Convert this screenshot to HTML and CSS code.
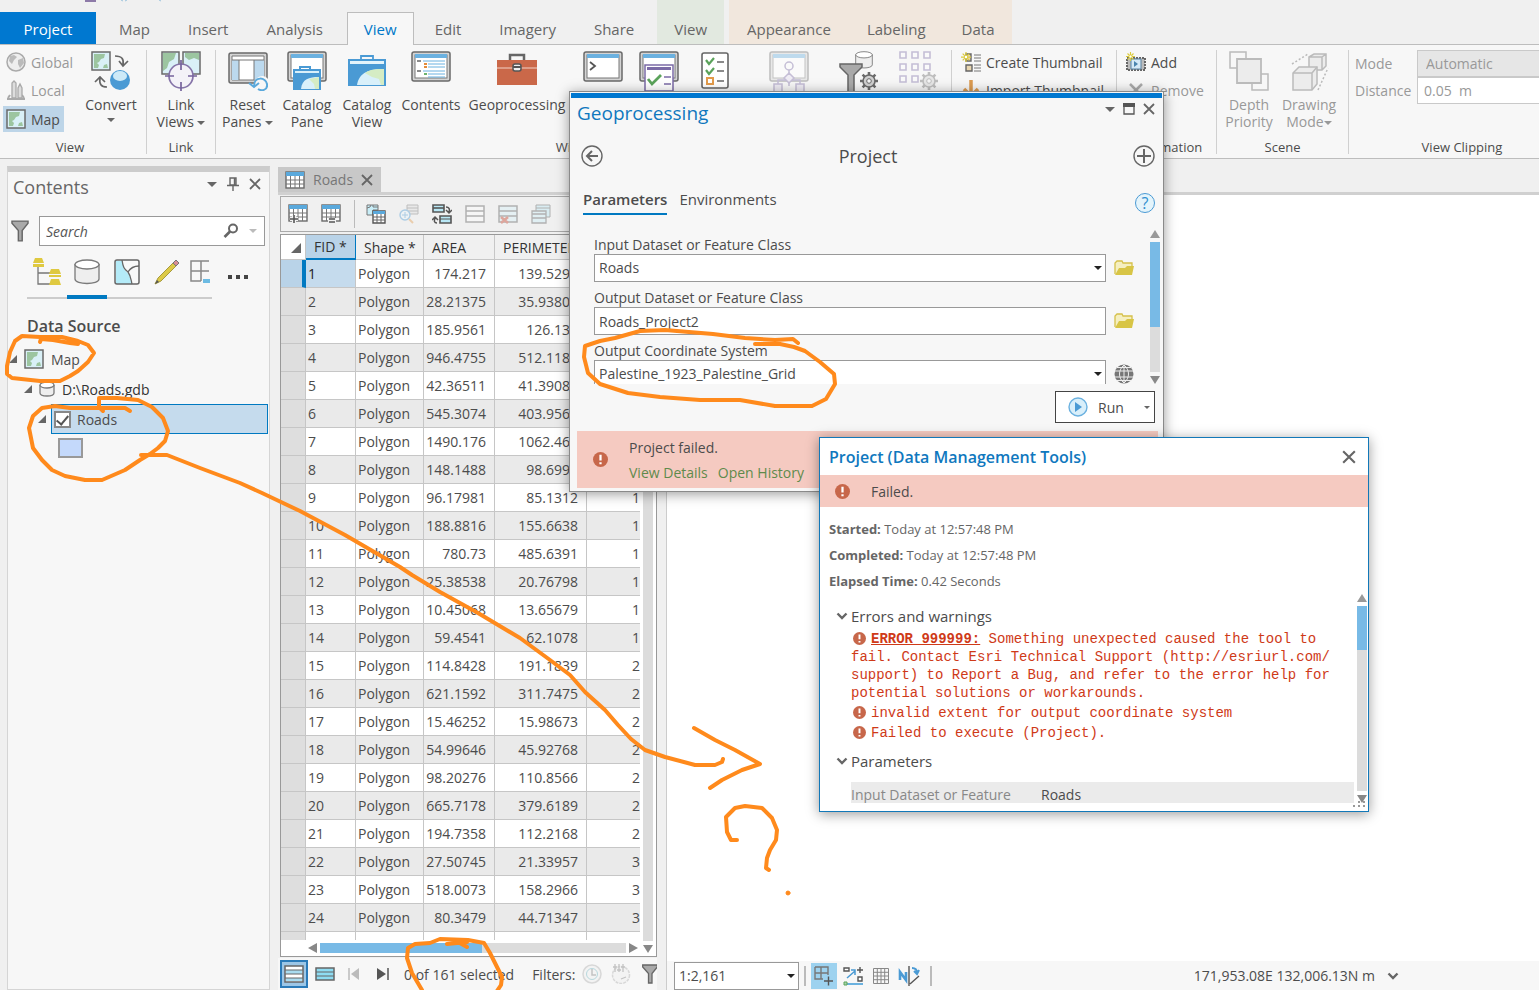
FILE: index.html
```html
<!DOCTYPE html>
<html lang="en">
<head>
    <meta charset="UTF-8" />
    <meta name="viewport" content="width=device-width, initial-scale=1.0" />
    <title>Roads - Project</title>
    <link rel="stylesheet" href="styles.css">
</head>
<body>
    <!-- shared icons -->
    <svg class="defs" aria-hidden="true">
        <symbol id="i-map" viewBox="0 0 20 20">
            <rect x="1" y="1" width="18" height="18" fill="#d9f0f7" stroke="#6a6a6a" stroke-width="1.5" />
            <path d="M3 3h11l-1 4-3 1-2 3-2 1 2 2-1 3H3zM12 17l1-3 3-1 1 4zM3 9l2 1-1 2z" fill="#9cc5a0" />
        </symbol>
        <symbol id="i-error" viewBox="0 0 16 16">
            <circle cx="8" cy="8" r="8" fill="#c7674a" />
            <path d="M8 3v6M8 11v2" stroke="#fff" stroke-width="2.4" />
        </symbol>
        <symbol id="i-close" viewBox="0 0 12 12">
            <path d="M1 1l10 10M11 1L1 11" stroke="currentColor" stroke-width="1.8" fill="none" />
        </symbol>
        <symbol id="i-table" viewBox="0 0 20 18">
            <rect x="1" y="1" width="18" height="16" fill="#fff" stroke="#6a6a6a" stroke-width="1.4" />
            <rect x="1" y="1" width="18" height="4" fill="#5aa9dc" />
            <path d="M1 9h18M1 13h18M5.500 5v12M10 5v12M14.500 5v12" stroke="#777" fill="none" />
        </symbol>
        <symbol id="i-window" viewBox="0 0 40 32">
            <rect x="1" y="1" width="38" height="29" rx="2" fill="#d4d4d4" stroke="#6a6a6a" stroke-width="1.500" />
            <rect x="4" y="4" width="32" height="23" fill="#fff" stroke="#777" />
            <rect x="4" y="3" width="32" height="4" fill="#6bb1e0" />
        </symbol>
        <symbol id="i-gear" viewBox="0 0 20 20">
            <path d="M10 1v18M1 10h18M3.600 3.600l12.800 12.800M16.400 3.600L3.600 16.400" stroke="#6a6a6a" stroke-width="2.600" />
            <circle cx="10" cy="10" r="6" fill="#d0d0d0" stroke="#6a6a6a" stroke-width="1.600" />
            <circle cx="10" cy="10" r="2.300" fill="#f7f7f7" stroke="#6a6a6a" />
        </symbol>
        <symbol id="i-funnel" viewBox="0 0 16 20">
            <path d="M.7 1h14.600v2L10 9.500V19H6.500V9.500L.7 3z" fill="#a9a9a9" stroke="#666" stroke-width="1.300" />
        </symbol>
        <symbol id="i-folder" viewBox="0 0 20 16">
            <path d="M1 14V3l2-2h5l1 2h9v4" fill="#f5efc0" stroke="#d5c04a" stroke-width="1.300" />
            <path d="M1 15L5 8h6l2-2h7l-2 9z" fill="#d8c546" />
        </symbol>
        <symbol id="i-cylinder" viewBox="0 0 26 26">
            <path d="M1 5v15c0 6 24 6 24 0V5" fill="#eee" stroke="#7a7a7a" stroke-width="1.300" />
            <ellipse cx="13" cy="5.500" rx="12" ry="4.500" fill="#fff" stroke="#7a7a7a" stroke-width="1.300" />
        </symbol>
        <symbol id="i-spark" viewBox="0 0 12 12">
            <path d="M6 0v12M0 6h12M2 2l8 8M10 2l-8 8" stroke="#dccb3c" stroke-width="1.500" />
            <circle cx="6" cy="6" r="2" fill="#fff" stroke="#dccb3c" />
        </symbol>
        <symbol id="i-chevron" viewBox="0 0 12 8">
            <path d="M1.500 1.500L6 6l4.500-4.500" stroke="#666" stroke-width="2.400" fill="none" />
        </symbol>
    </svg>

    <nav class="tabs">
        <button class="tab tab-project">Project</button>
        <button class="tab">Map</button>
        <button class="tab">Insert</button>
        <button class="tab">Analysis</button>
        <button class="tab tab-active">View</button>
        <button class="tab">Edit</button>
        <button class="tab">Imagery</button>
        <button class="tab">Share</button>
        <div class="context context-green">
            <button class="tab">View</button>
        </div>
        <div class="context context-peach">
            <button class="tab">Appearance</button>
            <button class="tab">Labeling</button>
            <button class="tab">Data</button>
        </div>
        <svg class="quick" viewBox="0 0 90 2" aria-hidden="true">
            <path d="M0 0h11v2H0z" fill="#8d7aa8" /><path d="M36 0l2 1M42 0l-2 1M74 0l2 1" stroke="#9cc3dd" />
        </svg>
    </nav>

    <div class="ribbon">
        <section class="group group-view">
            <div class="tools">
                <div class="stack">
                    <button class="small" disabled>
                        <svg width="20" height="20" viewBox="0 0 20 20"><circle cx="10" cy="10" r="9" fill="#eee" stroke="#aaa" stroke-width="1.500" /><path d="M4 4l4-1 3 2-3 3-2 4-3-3zM12 8l5-2 1 5-4 5-2-4z" fill="#bbb" /></svg>
                        Global
                    </button>
                    <button class="small" disabled>
                        <svg width="20" height="20" viewBox="0 0 20 20"><path d="M1 19h18M2 18l2-3M18 18l-2-3" stroke="#aaa" stroke-width="2" /><path d="M6 18V3l2-2 2 2v15zM12 18V8l2-4 2 4v10z" fill="#ddd" stroke="#aaa" stroke-width="1.300" /></svg>
                        Local
                    </button>
                    <button class="small small-on">
                        <svg width="20" height="20"><use href="#i-map" /></svg>
                        Map
                    </button>
                </div>
                <button class="big big-convert">
                    <svg width="40" height="40" viewBox="0 0 40 40">
                        <use href="#i-map" width="20" height="20" />
                        <path d="M24 5c7 0 9 3 8 9M28 10l4 5 5-5M16 36c-6 0-8-3-7-9M4 31l5-5 5 5" fill="none" stroke="#666" stroke-width="1.700" />
                        <circle cx="29" cy="29" r="10" fill="#4a9ad4" /><ellipse cx="29" cy="25" rx="7" ry="5" fill="#cdeaf8" />
                    </svg>
                    <span>Convert</span>
                    <i class="caret"></i>
                </button>
            </div>
            <h2>View</h2>
        </section>

        <section class="group group-link">
            <div class="tools">
                <button class="big">
                    <svg width="40" height="40" viewBox="0 0 40 40">
                        <path d="M1 1h17v22H1zM22 1h17v22H22z" fill="#d9f0f7" stroke="#6a6a6a" stroke-width="1.500" />
                        <path d="M2 2h13l-2 6-5 3-2 6-4 3zM24 2h14v7l-5-2-5 2-4-3z" fill="#9cc5a0" />
                        <circle cx="20" cy="25" r="12" fill="#f4f2f8" stroke="#8574a8" stroke-width="1.700" />
                        <path d="M20 9v10M20 31v9M4 25h9M27 25h9" stroke="#75639c" stroke-width="1.700" />
                    </svg>
                    <span>Link<br>Views <i class="caret"></i></span>
                </button>
            </div>
            <h2>Link</h2>
        </section>

        <section class="group group-windows">
            <div class="tools">
                <button class="big">
                    <svg width="40" height="40" viewBox="0 0 40 40">
                        <rect x="1" y="2" width="38" height="30" rx="2" fill="#d4d4d4" stroke="#6a6a6a" stroke-width="1.500" /><path d="M4 5h32v24H4z" fill="#fff" stroke="#777" />
                        <path d="M4 9h7v20H4zM26 9h10v20H26z" fill="#bcd9ee" /><path d="M4 9h32M11 9v20M26 9v20" stroke="#777" />
                        <path d="M28 33c2-9 12-7 11 0s-8 8-10 5" fill="#f7f7f7" stroke="#f7f7f7" stroke-width="4" />
                        <path d="M21 32l5 4 5-4M26 35c0-10 12-9 13-2s-6 7-9 5" fill="none" stroke="#5aa9dc" stroke-width="2" />
                    </svg>
                    <span>Reset<br>Panes <i class="caret"></i></span>
                </button>
                <button class="big">
                    <svg width="40" height="40" viewBox="0 0 40 40">
                        <use href="#i-window" width="40" height="32" />
                        <path d="M13 18v-2h10v2" fill="none" stroke="#4a9ad4" stroke-width="2" /><path d="M6 18h28v21H6z" fill="#4a9ad4" /><path d="M8 20h24v2H8z" fill="#d9f0fa" />
                        <path d="M14 38c1-10 8-12 18-12v12z" fill="#d9f0fa" /><path d="M22 28l10-2v12h-4l-1-5z" fill="#d5ecc4" />
                    </svg>
                    <span>Catalog<br>Pane</span>
                </button>
                <button class="big">
                    <svg width="40" height="40" viewBox="0 0 40 40">
                        <path d="M14 8V5h12v3" fill="none" stroke="#4a9ad4" stroke-width="1.800" /><path d="M1 8h38v27H1z" fill="#4a9ad4" /><path d="M3 10h34v3H3z" fill="#e4f4fb" />
                        <path d="M10 34c2-13 13-16 27-16v16z" fill="#d9f0fa" /><path d="M18 22c5-4 12-4 19-4v16h-3l-2-6-7-2z" fill="#d5ecc4" />
                    </svg>
                    <span>Catalog<br>View</span>
                </button>
                <button class="big">
                    <svg width="40" height="40" viewBox="0 0 40 40">
                        <use href="#i-window" width="40" height="32" />
                        <path d="M6 10h4M6 20h4" stroke="#666" stroke-width="1.500" /><path d="M12 10h22M17 13h17M17 16h17M12 20h22M17 23h17M17 26h17" stroke="#6bb1e0" /><path d="M13 13h3M13 16h3" stroke="#e38b3a" stroke-width="2" /><path d="M13 23h3" stroke="#6db36d" stroke-width="2" />
                    </svg>
                    <span>Contents</span>
                </button>
                <button class="big">
                    <svg width="40" height="40" viewBox="0 0 40 40">
                        <path d="M13 9V4h14v5" fill="none" stroke="#666" stroke-width="2.500" /><path d="M0 9h40v25H0z" fill="#ca6849" /><path d="M0 17h40" stroke="#f3d3c8" />
                        <rect x="16" y="13" width="8" height="7" rx="2" fill="#eee" stroke="#555" stroke-width="1.500" /><path d="M16 16h8" stroke="#555" stroke-width="2" />
                    </svg>
                    <span>Geoprocessing</span>
                </button>
                <button class="big" aria-label="Python">
                    <svg width="40" height="40" viewBox="0 0 40 40"><use href="#i-window" width="40" height="32" /><path d="M7 11l5 4-5 4" fill="none" stroke="#555" stroke-width="1.800" /></svg>
                </button>
                <button class="big" aria-label="Tasks">
                    <svg width="40" height="40" viewBox="0 0 40 40"><use href="#i-window" width="40" height="32" /><path d="M6 14h28v26H6z" fill="#fff" stroke="#7b6ba6" stroke-width="1.500" /><path d="M8 16h24v3H8z" fill="#7b6ba6" /><path d="M25 26h7M25 33h7" stroke="#7b6ba6" stroke-width="1.500" /><path d="M9 28l4 5 9-9" fill="none" stroke="#5ba35b" stroke-width="2.800" /></svg>
                </button>
                <button class="big" aria-label="Task items">
                    <svg width="40" height="40" viewBox="0 0 40 40"><rect x="7" y="2" width="26" height="35" rx="2" fill="#fff" stroke="#666" stroke-width="1.600" /><path d="M22 11h7M22 20h7M22 30h7" stroke="#666" stroke-width="1.500" /><path d="M11 9l3 4 5-6M11 19l3 4 5-6" fill="none" stroke="#5ba35b" stroke-width="2.200" /><path d="M12 27h6v6h-6z" fill="#fff" stroke="#e39b4a" stroke-width="2" /></svg>
                </button>
                <button class="big faded" aria-label="Workflow" disabled>
                    <svg width="40" height="40" viewBox="0 0 40 40"><use href="#i-window" width="40" height="32" /><path d="M20 15v20M9 36v-7h22v7" fill="none" stroke="#7b6ba6" stroke-width="1.500" /><circle cx="20" cy="15" r="4" fill="#fff" stroke="#7b6ba6" stroke-width="1.500" /><path d="M20 22l5 5-5 5-5-5zM5 33h8v8H5zM27 33h8v8h-8z" fill="#e4def2" stroke="#7b6ba6" stroke-width="1.500" /></svg>
                </button>
                <button class="big" aria-label="Filter settings">
                    <svg width="40" height="40" viewBox="0 0 40 40"><use href="#i-cylinder" x="16" width="18" height="18" /><path d="M1 13h22v3l-8 8v17H9V24l-8-8z" fill="#a9a9a9" stroke="#666" stroke-width="1.500" /><use href="#i-gear" x="20" y="20" width="20" height="20" /></svg>
                </button>
                <button class="big faded" aria-label="Grid settings" disabled>
                    <svg width="40" height="40" viewBox="0 0 40 40"><path d="M1 1h6v6H1zM13 1h6v6h-6zM25 1h6v6h-6zM1 13h6v6H1zM13 13h6v6h-6zM25 13h6v6h-6zM1 25h6v6H1zM13 25h6v6h-6z" fill="#fff" stroke="#7b6ba6" stroke-width="1.600" /><use href="#i-gear" x="20" y="20" width="20" height="20" /></svg>
                </button>
            </div>
            <h2>Windows</h2>
        </section>

        <section class="group group-thumbnail">
            <div class="stack">
                <button class="small">
                    <svg width="20" height="20" viewBox="0 0 20 20"><path d="M5 2h5v7H5zM5 13h6v6H5z" fill="#e8d6b0" stroke="#666" stroke-width="1.400" /><path d="M13 3h7M13 6h7M13 9h7M13 13h7M13 16h7M13 19h7" stroke="#777" /><use href="#i-spark" width="10" height="10" /></svg>
                    Create Thumbnail
                </button>
                <button class="small">
                    <svg width="20" height="20" viewBox="0 0 20 20"><path d="M10 0v16M3 9l7 7 7-7" fill="none" stroke="#dc9b50" stroke-width="3.500" /></svg>
                    Import Thumbnail
                </button>
            </div>
            <h2>Thumbnail</h2>
        </section>

        <section class="group group-animation">
            <div class="stack">
                <button class="small">
                    <svg width="20" height="20" viewBox="0 0 20 20"><path d="M1 6h18v12H1z" fill="#bbb" stroke="#666" stroke-dasharray="2 1" stroke-width="2" /><path d="M5 7h10v10H5z" fill="#d5e9f6" stroke="#5b83a3" /><path d="M8 9l4 3-4 3z" fill="#4a84ad" /><use href="#i-spark" width="9" height="9" /></svg>
                    Add
                </button>
                <button class="small" disabled>
                    <svg width="20" height="20" viewBox="0 0 20 20"><path d="M4 4l12 12M16 4L4 16" stroke="#aaa" stroke-width="2.500" /></svg>
                    Remove
                </button>
            </div>
            <h2>Animation</h2>
        </section>

        <section class="group group-scene">
            <div class="tools">
                <button class="big" disabled>
                    <svg width="40" height="40" viewBox="0 0 40 40"><path d="M1 1h16v16H1zM23 23h16v16H23z" fill="#f7f7f7" stroke="#bbb" stroke-width="1.500" /><path d="M8 8h24v24H8z" fill="#ececec" stroke="#bbb" stroke-width="1.800" /></svg>
                    <span>Depth<br>Priority</span>
                </button>
                <button class="big" disabled>
                    <svg width="40" height="40" viewBox="0 0 40 40"><path d="M20 6l5-3h12v12l-4 4H20zM20 6h13v13M33 6l4-3" fill="#ececec" stroke="#bbb" stroke-width="1.500" /><path d="M4 22l6-6h18v17l-5 6H4z" fill="#ececec" stroke="#bbb" stroke-width="1.500" /><path d="M4 22h19v17M23 22l5-6" fill="none" stroke="#bbb" stroke-width="1.500" /><path d="M3 13L19 3M29 39l10-22" stroke="#bbb" stroke-dasharray="2 2" stroke-width="1.500" /></svg>
                    <span>Drawing<br>Mode<i class="caret caret-dim"></i></span>
                </button>
            </div>
            <h2>Scene</h2>
        </section>

        <section class="group group-clipping">
            <div class="clip-form">
                <label for="clip-mode">Mode</label>
                <select id="clip-mode" disabled><option>Automatic</option></select>
                <label for="clip-distance">Distance</label>
                <input id="clip-distance" type="text" value="0.05  m" disabled>
            </div>
            <h2>View Clipping</h2>
        </section>
    </div>

    <main class="workspace">
        <aside class="contents">
            <header class="pane-head">
                <h1>Contents</h1>
                <button class="icon-btn" aria-label="Menu"><i class="caret caret-lg"></i></button>
                <button class="icon-btn" aria-label="Pin"><svg width="12" height="14" viewBox="0 0 12 14"><path d="M3 1h6v7H3zM7.500 1v7M0 8.500h12M6 9v5" fill="none" stroke="#666" stroke-width="1.400" /></svg></button>
                <button class="icon-btn" aria-label="Close"><svg width="12" height="12"><use href="#i-close" /></svg></button>
            </header>
            <div class="search-row">
                <svg width="18" height="22"><use href="#i-funnel" /></svg>
                <div class="search">
                    <input type="text" placeholder="Search" aria-label="Search">
                    <svg width="16" height="16" viewBox="0 0 16 16"><circle cx="10" cy="5.500" r="4" fill="none" stroke="#666" stroke-width="2" /><path d="M7 8.500L1.500 14" stroke="#666" stroke-width="2.600" /></svg>
                    <i class="caret caret-light"></i>
                </div>
            </div>
            <div class="list-by">
                <button class="list-tab" aria-label="List by drawing order"><svg width="28" height="28" viewBox="0 0 28 28"><path d="M5 8v18h14M5 15h14" fill="none" stroke="#777" stroke-width="1.300" /><path d="M2 0h7l2 5H0zM0 6h11v3H0zM18 11h8l2 5H16zM16 17h12v2H16zM18 21h8l2 6H16z" fill="#dfc940" /></svg></button>
                <button class="list-tab list-tab-on" aria-label="List by data source"><svg width="26" height="26"><use href="#i-cylinder" /></svg></button>
                <button class="list-tab" aria-label="List by selection"><svg width="26" height="26" viewBox="0 0 26 26"><rect x="1" y="1" width="24" height="24" rx="2" fill="#f9f9f9" /><path d="M2 2h6c1 7 2 9 6 12 2 3 3 7 3 11H2z" fill="#b4ebf8" /><path d="M8 1c1 7 2 9 6 12 3 4 3 8 4 12M14 13c3-5 7-6 11-6" fill="none" stroke="#666" stroke-width="1.300" /><rect x="1" y="1" width="24" height="24" rx="2" fill="none" stroke="#666" stroke-width="1.500" /></svg></button>
                <button class="list-tab" aria-label="List by editing"><svg width="26" height="26" viewBox="0 0 26 26"><path d="M1 25l3-6L19 4l3 3L7 22z" fill="#ddca47" stroke="#a79a3d" /><path d="M1 25l2-4 2 2z" fill="#555" /><path d="M19 4l3-3 3 3-3 3z" fill="#d98d93" stroke="#777" /></svg></button>
                <button class="list-tab" aria-label="List by snapping"><svg width="22" height="26" viewBox="0 0 22 26"><path d="M20 2H2v20h10M2 12h18M12 2v20" fill="none" stroke="#888" stroke-width="1.500" /><path d="M14 20h7v4h-7z" fill="#6cbbe3" /></svg></button>
                <button class="list-more" aria-label="More"><svg width="20" height="6" viewBox="0 0 20 6"><path d="M0 1h4v4H0zM8 1h4v4H8zM16 1h4v4h-4z" fill="#444" /></svg></button>
            </div>
            <h3>Data Source</h3>
            <ul class="tree">
                <li class="tree-row tree-map"><i class="expander"></i><svg width="20" height="20"><use href="#i-map" /></svg><span>Map</span></li>
                <li class="tree-row tree-gdb"><i class="expander"></i><svg width="16" height="16" viewBox="0 0 16 16"><path d="M1 4v8c0 4 14 4 14 0V4" fill="#eee" stroke="#7a7a7a" stroke-width="1.300" /><ellipse cx="8" cy="4" rx="7" ry="3" fill="#fff" stroke="#7a7a7a" stroke-width="1.300" /></svg><span>D:\Roads.gdb</span></li>
                <li class="tree-row tree-layer"><i class="expander"></i>
                    <label class="layer"><input type="checkbox" checked> Roads</label>
                </li>
                <li class="tree-symbol"></li>
            </ul>
        </aside>

        <section class="table-pane">
            <div class="doc-tab">
                <svg width="20" height="18"><use href="#i-table" /></svg>
                <span>Roads</span>
                <button class="icon-btn" aria-label="Close Roads"><svg width="12" height="12"><use href="#i-close" /></svg></button>
            </div>
            <div class="table-box">
                <div class="table-tools">
                    <button class="icon-btn" aria-label="Add field"><svg width="20" height="20" viewBox="0 0 20 20"><use href="#i-table" width="20" height="18" /><path d="M2 15h8M6 11v8" stroke="#f2f2f2" stroke-width="4" /><path d="M2 15h8M6 11v8" stroke="#555" stroke-width="1.600" /></svg></button>
                    <button class="icon-btn" aria-label="Delete field"><svg width="20" height="20" viewBox="0 0 20 20"><use href="#i-table" width="20" height="18" /><path d="M7 14h8v5H7z" fill="#f2f2f2" /><path d="M8 15h6M8 18h6" stroke="#555" stroke-width="1.500" /></svg></button>
                    <span class="rule"></span>
                    <button class="icon-btn" aria-label="Select by attributes"><svg width="20" height="20" viewBox="0 0 20 20"><path d="M1 1h11v5H7v5H1z" fill="#c8eef8" stroke="#777" /><path d="M1 4l3-1 1-2M7 1v2h5" fill="none" stroke="#777" /><path d="M7 7h12v12H7z" fill="#fff" stroke="#555" stroke-width="1.400" /><path d="M7 7h12v3H7z" fill="#5aa9dc" /><path d="M7 13h12M7 16h12M11 10v9M15 10v9" stroke="#666" /></svg></button>
                    <button class="icon-btn faded" aria-label="Zoom to"><svg width="20" height="20" viewBox="0 0 20 20"><path d="M8 1h11v9H8zM8 4h11M8 7h11" fill="#ddd" stroke="#777" /><circle cx="6" cy="11" r="5" fill="#e9f5fa" stroke="#4a9ad4" stroke-width="1.400" /><path d="M6 8v6M3 11h6" stroke="#4a9ad4" /><path d="M10 15l4 4" stroke="#e39b4a" stroke-width="2" /></svg></button>
                    <button class="icon-btn" aria-label="Switch selection"><svg width="20" height="20" viewBox="0 0 20 20"><path d="M1 1h11v7H1z" fill="#b9e8f6" stroke="#555" stroke-width="1.600" /><path d="M1 4h11" stroke="#555" stroke-width="1.600" /><path d="M8 12h11v7H8z" fill="#b9e8f6" stroke="#555" stroke-width="1.600" /><path d="M8 15h11" stroke="#555" /><path d="M14 3c3 0 4 2 3 5M14 6l3 3 3-3M5 19c-3 0-3-2-2-5M0 16l3-3 3 3" fill="none" stroke="#555" stroke-width="1.500" /></svg></button>
                    <button class="icon-btn faded" aria-label="Clear selection"><svg width="20" height="20" viewBox="0 0 20 20"><path d="M1 2h18v16H1zM1 7h18M1 12h18" fill="#fff" stroke="#555" stroke-width="1.500" /></svg></button>
                    <button class="icon-btn faded" aria-label="Delete selection"><svg width="20" height="20" viewBox="0 0 20 20"><path d="M1 2h18v16H1zM1 7h18M1 12h18" fill="#d5f0f8" stroke="#555" stroke-width="1.500" /><path d="M3 13l7 6M10 13l-7 6" stroke="#c23a22" stroke-width="2.600" /></svg></button>
                    <button class="icon-btn faded" aria-label="Copy"><svg width="20" height="20" viewBox="0 0 20 20"><path d="M5 1h14v12H5z" fill="#b9e8f6" stroke="#555" /><path d="M5 4h14" stroke="#555" /><path d="M1 7h14v12H1zM1 10h14M1 14h14" fill="#c9eef8" stroke="#555" stroke-width="1.300" /></svg></button>
                </div>
                <div class="grid-row">
                    <div class="grid-col">
                        <div class="grid-scroll">
                            <table>
                                <colgroup><col class="c-head"><col class="c-fid"><col class="c-shape"><col class="c-area"><col class="c-perim"><col class="c-next"></colgroup>
                                <thead>
                                    <tr><th class="corner"><i class="expander"></i></th><th class="sorted">FID *</th><th>Shape *</th><th>AREA</th><th>PERIMETER</th><th></th></tr>
                                </thead>
                                <tbody>
                                    <tr class="current"><th></th><td>1</td><td>Polygon</td><td>174.217</td><td>139.5291</td><td></td></tr>
                                    <tr><th></th><td>2</td><td>Polygon</td><td>28.21375</td><td>35.93801</td><td></td></tr>
                                    <tr><th></th><td>3</td><td>Polygon</td><td>185.9561</td><td>126.131</td><td></td></tr>
                                    <tr><th></th><td>4</td><td>Polygon</td><td>946.4755</td><td>512.1181</td><td></td></tr>
                                    <tr><th></th><td>5</td><td>Polygon</td><td>42.36511</td><td>41.39081</td><td></td></tr>
                                    <tr><th></th><td>6</td><td>Polygon</td><td>545.3074</td><td>403.9561</td><td></td></tr>
                                    <tr><th></th><td>7</td><td>Polygon</td><td>1490.176</td><td>1062.461</td><td></td></tr>
                                    <tr><th></th><td>8</td><td>Polygon</td><td>148.1488</td><td>98.6991</td><td></td></tr>
                                    <tr><th></th><td>9</td><td>Polygon</td><td>96.17981</td><td>85.1312</td><td>1</td></tr>
                                    <tr><th></th><td>10</td><td>Polygon</td><td>188.8816</td><td>155.6638</td><td>1</td></tr>
                                    <tr><th></th><td>11</td><td>Polygon</td><td>780.73</td><td>485.6391</td><td>1</td></tr>
                                    <tr><th></th><td>12</td><td>Polygon</td><td>25.38538</td><td>20.76798</td><td>1</td></tr>
                                    <tr><th></th><td>13</td><td>Polygon</td><td>10.45068</td><td>13.65679</td><td>1</td></tr>
                                    <tr><th></th><td>14</td><td>Polygon</td><td>59.4541</td><td>62.1078</td><td>1</td></tr>
                                    <tr><th></th><td>15</td><td>Polygon</td><td>114.8428</td><td>191.1839</td><td>2</td></tr>
                                    <tr><th></th><td>16</td><td>Polygon</td><td>621.1592</td><td>311.7475</td><td>2</td></tr>
                                    <tr><th></th><td>17</td><td>Polygon</td><td>15.46252</td><td>15.98673</td><td>2</td></tr>
                                    <tr><th></th><td>18</td><td>Polygon</td><td>54.99646</td><td>45.92768</td><td>2</td></tr>
                                    <tr><th></th><td>19</td><td>Polygon</td><td>98.20276</td><td>110.8566</td><td>2</td></tr>
                                    <tr><th></th><td>20</td><td>Polygon</td><td>665.7178</td><td>379.6189</td><td>2</td></tr>
                                    <tr><th></th><td>21</td><td>Polygon</td><td>194.7358</td><td>112.2168</td><td>2</td></tr>
                                    <tr><th></th><td>22</td><td>Polygon</td><td>27.50745</td><td>21.33957</td><td>3</td></tr>
                                    <tr><th></th><td>23</td><td>Polygon</td><td>518.0073</td><td>158.2966</td><td>3</td></tr>
                                    <tr><th></th><td>24</td><td>Polygon</td><td>80.3479</td><td>44.71347</td><td>3</td></tr>
                                    <tr><th></th><td></td><td></td><td></td><td></td><td></td></tr>
                                </tbody>
                            </table>
                        </div>
                        <div class="hbar"><i class="arrow-left"></i><span class="track"><span class="thumb"></span></span><i class="arrow-right"></i></div>
                    </div>
                    <div class="vbar grid-vbar"><span class="track"></span><i class="arrow-down"></i></div>
                </div>
            </div>
            <footer class="table-foot">
                <button class="icon-btn foot-on" aria-label="Show all records"><svg width="20" height="18" viewBox="0 0 20 18"><path d="M1 1h18v16H1z" fill="#fff" stroke="#666" stroke-width="1.500" /><path d="M2 5h16v4H2zM2 13h16v3H2z" fill="#a9dcf0" /><path d="M1 5h18M1 9h18M1 13h18" stroke="#666" /></svg></button>
                <button class="icon-btn" aria-label="Show selected records"><svg width="20" height="14" viewBox="0 0 20 14"><path d="M1 1h18v12H1z" fill="#8edcf2" stroke="#666" stroke-width="1.500" /><path d="M1 5h18M1 9h18" stroke="#666" /></svg></button>
                <button class="icon-btn" aria-label="First" disabled><svg width="14" height="12" viewBox="0 0 14 12"><path d="M2 0v12" stroke="#bbb" stroke-width="1.500" /><path d="M12 0v12L4 6z" fill="#bbb" /></svg></button>
                <button class="icon-btn" aria-label="Last"><svg width="14" height="12" viewBox="0 0 14 12"><path d="M12 0v12" stroke="#555" stroke-width="1.500" /><path d="M1 0v12l9-6z" fill="#555" /></svg></button>
                <span class="selected-count">0 of 161 selected</span>
                <span>Filters:</span>
                <button class="icon-btn faded" aria-label="Time filter" disabled><svg width="20" height="20" viewBox="0 0 20 20"><circle cx="10" cy="10" r="9" fill="#eee" stroke="#aaa" stroke-width="1.500" /><circle cx="10" cy="10" r="5.500" fill="none" stroke="#5aa9b8" /><path d="M10 5v6h4" fill="none" stroke="#777" stroke-width="1.500" /></svg></button>
                <button class="icon-btn faded" aria-label="Range filter" disabled><svg width="20" height="20" viewBox="0 0 20 20"><circle cx="10" cy="11" r="8.500" fill="#eee" stroke="#aaa" stroke-width="1.500" stroke-dasharray="3 1" /><path d="M4 0v8M8 0v8M12 0v8M2 3h4M6 6h4M10 3h4M10 15l5-2" stroke="#777" stroke-width="1.300" /></svg></button>
                <button class="icon-btn" aria-label="Filter"><svg width="16" height="20"><use href="#i-funnel" /></svg></button>
            </footer>
        </section>

        <section class="map-pane">
            <div class="map-canvas"></div>
            <footer class="map-foot">
                <div class="pick pick-scale">
                    <select aria-label="Scale"><option>1:2,161</option></select>
                </div>
                <span class="rule"></span>
                <button class="icon-btn map-on" aria-label="Selection"><svg width="20" height="20" viewBox="0 0 20 20"><path d="M1 1h13v8M9 13H1V1M1 7h13M7 1v12" fill="none" stroke="#777" stroke-width="1.400" /><path d="M10 15h9M14.500 10.500v9" stroke="#555" stroke-width="1.400" /></svg></button>
                <button class="icon-btn" aria-label="Snapping"><svg width="20" height="20" viewBox="0 0 20 20"><path d="M1 2h5v3H1zM14 4h6M17 1v6M15 11h4v4h-4z" fill="#fff" stroke="#555" stroke-width="1.400" /><path d="M4 12l8-7M12 9V4H8" fill="none" stroke="#4a9ad4" stroke-width="1.500" /><path d="M2 18h18" stroke="#5aa9dc" stroke-width="1.800" /><path d="M1 16h3v3H1z" fill="#a9d4a9" stroke="#5ba35b" /></svg></button>
                <button class="icon-btn" aria-label="Grid"><svg width="16" height="16" viewBox="0 0 16 16"><path d="M.5.500h15v15H.5zM.5 4.300h15M.5 8h15M.5 11.700h15M4.300.500v15M8 .500v15M11.700.500v15" fill="none" stroke="#888" /></svg></button>
                <button class="icon-btn" aria-label="North rotation"><svg width="22" height="20" viewBox="0 0 22 20"><path d="M2 14V6l6 8V6" fill="none" stroke="#4a9ad4" stroke-width="2.600" /><path d="M11 0v20M12 18l9-8" stroke="#555" stroke-width="1.400" /><path d="M14 2c4 0 5 2 5 5M16 5l3 3 2-4" fill="none" stroke="#4a9ad4" stroke-width="2" /></svg></button>
                <span class="rule rule-end"></span>
                <button class="coords">171,953.08E 132,006.13N m <svg width="12" height="8"><use href="#i-chevron" /></svg></button>
            </footer>
        </section>
    </main>

    <!-- floating geoprocessing pane -->
    <section class="geo">
        <header class="geo-title">
            <h1>Geoprocessing</h1>
            <button class="icon-btn" aria-label="Menu"><i class="caret caret-lg"></i></button>
            <button class="icon-btn" aria-label="Maximize"><svg width="12" height="12" viewBox="0 0 12 12"><path d="M1 1h10v10H1z" fill="none" stroke="#555" stroke-width="1.300" /><path d="M0 0h12v4H0z" fill="#555" /></svg></button>
            <button class="icon-btn" aria-label="Close"><svg width="12" height="12"><use href="#i-close" /></svg></button>
        </header>
        <div class="geo-tool">
            <button class="icon-btn" aria-label="Back"><svg width="22" height="22" viewBox="0 0 22 22"><circle cx="11" cy="11" r="10" fill="none" stroke="#666" stroke-width="1.400" /><path d="M17 11H6M11 6l-5 5 5 5" fill="none" stroke="#666" stroke-width="2" /></svg></button>
            <h2>Project</h2>
            <button class="icon-btn" aria-label="Add"><svg width="22" height="22" viewBox="0 0 22 22"><circle cx="11" cy="11" r="10" fill="none" stroke="#666" stroke-width="1.400" /><path d="M4 11h14M11 4v14" stroke="#666" stroke-width="2" /></svg></button>
        </div>
        <div class="geo-tabs">
            <button class="geo-tab geo-tab-on">Parameters</button>
            <button class="geo-tab">Environments</button>
            <button class="help" aria-label="Help">?</button>
        </div>
        <div class="geo-body">
            <div class="fields">
                <label for="in-data">Input Dataset or Feature Class</label>
                <div class="field">
                    <div class="pick"><select id="in-data"><option>Roads</option></select></div>
                    <button class="icon-btn" aria-label="Browse"><svg width="20" height="16"><use href="#i-folder" /></svg></button>
                </div>
                <label for="out-data">Output Dataset or Feature Class</label>
                <div class="field">
                    <input id="out-data" type="text" value="Roads_Project2">
                    <button class="icon-btn" aria-label="Browse"><svg width="20" height="16"><use href="#i-folder" /></svg></button>
                </div>
                <label for="out-sys">Output Coordinate System</label>
                <div class="field">
                    <div class="pick"><select id="out-sys"><option>Palestine_1923_Palestine_Grid</option></select></div>
                    <button class="icon-btn" aria-label="Select coordinate system"><svg width="20" height="20" viewBox="0 0 20 20"><circle cx="10" cy="10" r="9.500" fill="#777" /><path d="M1 7h18M1 13h18M3 3.500h14M3 16.500h14M10 1v18M10 1c-6 5-6 13 0 18M10 1c6 5 6 13 0 18" fill="none" stroke="#eee" /></svg></button>
                </div>
            </div>
            <div class="vbar geo-vbar"><i class="arrow-up"></i><span class="track"><span class="thumb"></span></span><i class="arrow-down"></i></div>
        </div>
        <div class="run-row">
            <button class="run"><svg width="20" height="20" viewBox="0 0 20 20"><circle cx="10" cy="10" r="9" fill="#d9effa" stroke="#6bb1e0" stroke-width="1.400" /><path d="M7 5l7 5-7 5z" fill="#4a9ad4" /></svg><span>Run</span><i class="caret"></i></button>
        </div>
        <div class="geo-status">
            <svg width="15" height="15"><use href="#i-error" /></svg>
            <div>
                <p>Project failed.</p>
                <p><a href="#">View Details</a><a href="#">Open History</a></p>
            </div>
        </div>
    </section>

    <!-- tool result popup -->
    <section class="result">
        <header>
            <h1>Project (Data Management Tools)</h1>
            <button class="icon-btn" aria-label="Close"><svg width="14" height="14"><use href="#i-close" /></svg></button>
        </header>
        <p class="result-state"><svg width="15" height="15"><use href="#i-error" /></svg>Failed.</p>
        <div class="times">
            <p><b>Started:</b> Today at 12:57:48 PM</p>
            <p><b>Completed:</b> Today at 12:57:48 PM</p>
            <p><b>Elapsed Time:</b> 0.42 Seconds</p>
        </div>
        <div class="log-row">
            <div class="log">
                <h2><svg width="12" height="8"><use href="#i-chevron" /></svg>Errors and warnings</h2>
                <div class="messages">
                    <p><svg width="13" height="13"><use href="#i-error" /></svg><a href="#">ERROR 999999:</a> Something unexpected caused the tool to<br>fail. Contact Esri Technical Support (http://esriurl.com/<br>support) to Report a Bug, and refer to the error help for<br>potential solutions or workarounds.</p>
                    <p><svg width="13" height="13"><use href="#i-error" /></svg>invalid extent for output coordinate system</p>
                    <p><svg width="13" height="13"><use href="#i-error" /></svg>Failed to execute (Project).</p>
                </div>
                <h2><svg width="12" height="8"><use href="#i-chevron" /></svg>Parameters</h2>
                <dl><dt>Input Dataset or Feature</dt><dd>Roads</dd></dl>
            </div>
            <div class="vbar result-vbar"><i class="arrow-up"></i><span class="track"><span class="thumb"></span></span><i class="arrow-down"></i></div>
        </div>
        <svg class="grip" width="12" height="8" viewBox="0 0 12 8"><path d="M0 5h2v2H0zM5 5h2v2H5zM10 5h2v2h-2zM5 1h2v2H5zM10 1h2v2h-2z" fill="#999" /></svg>
    </section>

    <!-- hand-drawn marks -->
    <svg class="marks" width="1539" height="990" viewBox="0 0 1539 990" aria-hidden="true">
        <path d="M40 342l1-3 12 1 17 3 8 1M22 336l18 1h22l16 4 10 4 6 8-6 9-10 9-8 5-10 5H40l-28-3-5-4v-8l3-14 5-11 7-5" />
        <path d="M103 411l-4-4v-9h18l21 2 14 7 11 11 5 13-3 10-7 7-8 6-10 6-15 10-23 10H85l-20-4-13-6-10-10-9-12-4-20 4-12 9-8 13-2 15 2h55l5 3" />
        <path d="M141 455h26l33 13 40 15 22 10 38 18 45 24 55 32 12 8 28 17 38 21 42 25 30 22 20 15 15 17 20 18 13 15 13 14 14 11 20 7 30 8h20l7-3 1-3" />
        <path d="M694 728l21 12 20 10 25 14-18 6-20 10-12 8" />
        <path d="M737 840h-6l-4-8-1-15 9-9 10-2 17 2 10 10 5 12-1 10-6 10-3 8-1 10 3 2" />
        <path d="M798 343l-5-4-18 1-30-2-32-4-48-4-25 1-25 7-15 3-15 5-1 11 4 16 12 11 28 9 32 4 40 3h40l35 6h37l14-7 9-15-1-10-14-12-15-11-11-4-14-3h-25" />
        <path d="M422 990l-10-17-5-15 1-10 7-4 15-1 10-4 28 1 16 3 6 10 7 14 5 10-1 8-6 9M447 944l20-2M467 947l-9-5" />
        <circle cx="788" cy="893" r="2" />
    </svg>
</body>
</html>
```
FILE: styles.css
```css
* {
    box-sizing: border-box;
    margin: 0;
    padding: 0;
}
body {
    display: flex;
    flex-direction: column;
    height: 100vh;
    overflow: hidden;
    position: relative;
    background: #f0f0f0;
    color: #4c4c4c;
    font: 14px/17px "Open Sans", "Noto Sans", sans-serif;
}
button, input, select {
    font: inherit;
    color: inherit;
    border: none;
    background: none;
}
svg {
    flex: none;
}
.defs {
    display: none;
}
h1, h2, h3 {
    font-weight: 400;
}
.icon-btn {
    display: flex;
    align-items: center;
    justify-content: center;
    color: #666;
}
.faded {
    opacity: 0.4;
}
.caret {
    display: inline-block;
    border: 4px solid transparent;
    border-top-color: #666;
    border-bottom: none;
    vertical-align: middle;
}
.caret-lg {
    border-width: 5px;
    border-bottom: none;
}
.caret-light {
    border-top-color: #bbb;
}
.caret-dim {
    border-top-color: #999;
}
.rule {
    width: 1px;
    background: #bbb;
}

/* ribbon tabs */
.tabs {
    display: flex;
    align-items: stretch;
    flex: none;
    height: 45px;
    position: relative;
    border-bottom: 1px solid #bdbdbd;
}
.tab {
    margin-top: 12px;
    padding: 2px 19px 0;
    font-size: 15px;
    color: #666;
}
.tab-project {
    width: 96px;
    margin-right: 4px;
    background: #0078d0;
    color: #fff;
}
.tab-active {
    margin: 12px 2px -1px 5px;
    padding: 0 16px;
    border: 1px solid #bdbdbd;
    border-bottom: none;
    background: #f7f7f7;
    color: #0078c8;
}
.context {
    display: flex;
}
.context-green {
    margin: 0 5px 0 4px;
    background: #e2e9e0;
}
.context-green .tab {
    padding: 2px 17px 0;
}
.context-peach {
    background: #f1e7dd;
}
.context-peach .tab {
    padding: 2px 18px 0;
}
.quick {
    position: absolute;
    left: 85px;
    top: 0;
    width: 90px;
    height: 2px;
}

/* ribbon */
.ribbon {
    display: flex;
    flex: none;
    height: 114px;
    padding-top: 5px;
    background: #f7f7f7;
    border-bottom: 1px solid #bdbdbd;
}
.group {
    display: flex;
    flex-direction: column;
    justify-content: space-between;
    flex: none;
    height: 104px;
    border-right: 1px solid #d0d0d0;
}
.group h2 {
    font-size: 13px;
    line-height: 14px;
    text-align: center;
}
.tools {
    display: flex;
    justify-content: center;
}
.group-view {
    width: 147px;
}
.group-view .tools {
    justify-content: space-between;
    padding: 0 5px 0 3px;
}
.group-view h2 {
    padding-right: 6px;
}
.group-link {
    width: 69px;
}
.group-windows .tools {
    display: grid;
    grid-template-columns: 63px 56px 64px 64px 108px 64px 48px 64px 84px 56px 64px;
}
.group-thumbnail {
    width: 165px;
    padding-left: 9px;
}
.group-animation {
    width: 100px;
    padding-left: 9px;
}
.group-scene {
    width: 132px;
}
.group-scene .tools {
    justify-content: flex-start;
    padding-left: 2px;
}
.group-clipping {
    flex: 1 1 0;
    min-width: 0;
    border-right: none;
    padding-left: 6px;
}
.group-clipping h2 {
    padding-left: 30px;
}
.big {
    display: flex;
    flex-direction: column;
    align-items: center;
    gap: 5px;
    padding-top: 1px;
    white-space: nowrap;
}
.big-convert, .group-scene .big {
    width: 60px;
}
button:disabled {
    color: #999;
}
.stack {
    display: flex;
    flex-direction: column;
    align-items: flex-start;
    margin-top: -2px;
}
.small {
    display: flex;
    align-items: center;
    gap: 5px;
    height: 28px;
    padding: 0 4px 0 3px;
    white-space: nowrap;
}
.group-view .small {
    margin-left: 0;
}
.group-thumbnail .small, .group-animation .small {
    padding: 0;
}
.group-view .small-on {
    height: 26px;
    margin-top: 2px;
    background: #bdd5e8;
}
.clip-form {
    display: grid;
    grid-template-columns: 56px 1fr;
    grid-auto-rows: 27px;
    column-gap: 6px;
    align-items: center;
    color: #999;
}
.clip-form select, .clip-form input {
    width: 100%;
    min-width: 0;
    height: 100%;
    padding-left: 8px;
    appearance: none;
    border: 1px solid #c9c9c9;
    border-right: none;
    opacity: 1;
    color: #999;
}
.clip-form select {
    background: #e6e6e6;
}
.clip-form input {
    padding-left: 6px;
    background: #fff;
    white-space: pre;
}

/* docked panes */
.workspace {
    display: flex;
    flex: 1;
    min-height: 0;
    padding-top: 7px;
}
.contents {
    flex: none;
    width: 263px;
    margin-left: 7px;
    border: 1px solid #d5d5d5;
    border-top: 6px solid #ccc;
    background: #f7f7f7;
}
.pane-head {
    display: flex;
    align-items: flex-start;
    gap: 10px;
    padding: 4px 8px 0 5px;
    height: 32px;
}
.pane-head h1 {
    flex: 1;
    font-size: 18px;
    line-height: 22px;
    color: #666;
}
.pane-head .icon-btn {
    height: 16px;
}
.search-row {
    display: flex;
    align-items: center;
    gap: 10px;
    padding: 12px 4px 0 3px;
}
.search {
    display: flex;
    align-items: center;
    gap: 10px;
    flex: 1;
    min-width: 0;
    height: 30px;
    padding: 0 7px 0 6px;
    background: #fff;
    border: 1px solid #999;
}
.search input {
    flex: 1;
    min-width: 0;
    font-style: italic;
    outline: none;
}
.search input::placeholder {
    color: #555;
    opacity: 1;
}
.list-by {
    display: flex;
    margin: 10px 0 0 19px;
}
.list-tab {
    display: flex;
    align-items: center;
    justify-content: center;
    width: 40px;
    height: 43px;
    padding-bottom: 9px;
    border-bottom: 2px solid #ccc;
}
.list-tab:nth-child(5) {
    width: 25px;
}
.list-tab-on {
    border-bottom: 4px solid #0079c1;
    padding-bottom: 7px;
}
.list-more {
    padding: 0 0 6px 16px;
}
.contents h3 {
    margin: 16px 0 0 19px;
    font-size: 16px;
    font-weight: 600;
    line-height: 22px;
}
.tree {
    list-style: none;
}
.tree-row {
    display: flex;
    align-items: center;
    height: 30px;
    gap: 7px;
}
.expander {
    flex: none;
    border: 4px solid transparent;
    border-right-color: #666;
    border-bottom-color: #666;
}
.tree-map {
    margin-top: 7px;
    padding-left: 1px;
}
.tree-gdb {
    padding-left: 16px;
    color: #333;
}
.tree-layer {
    padding: 0 1px 0 30px;
    gap: 5px;
}
.layer {
    display: flex;
    align-items: center;
    gap: 6px;
    flex: 1;
    height: 30px;
    padding-left: 2px;
    background: #c5dbed;
    border: 1px solid #0079c1;
}
.layer input {
    width: 17px;
    height: 17px;
    appearance: none;
    background: #fff;
    border: 2px solid #888;
    display: grid;
    place-items: center;
}
.layer input::before {
    content: "";
    width: 5px;
    height: 10px;
    border: solid #555;
    border-width: 0 2px 2px 0;
    transform: rotate(40deg);
}
.tree-symbol {
    width: 25px;
    height: 20px;
    margin: 4px 0 0 50px;
    background: #c4d9fb;
    border: 2px solid #999;
}

.table-pane {
    display: flex;
    flex-direction: column;
    flex: none;
    width: 379px;
    margin: 1px 0 0 8px;
}
.doc-tab {
    display: flex;
    align-items: center;
    gap: 8px;
    align-self: flex-start;
    height: 25px;
    padding: 0 8px 0 7px;
    background: #c8c8c8;
    color: #777;
}
.table-box {
    display: flex;
    flex-direction: column;
    flex: 1;
    min-height: 0;
    padding: 1px 0 0 2px;
    border-top: 3px solid #d0d0d0;
    margin-bottom: 1px;
}
.table-tools {
    display: flex;
    align-items: center;
    gap: 13px;
    height: 36px;
    flex: none;
    padding-left: 7px;
    border: 1px solid #aaa;
    background: #f0f0f0;
}
.table-tools .rule {
    height: 28px;
    margin: 0 -2px 0 0;
}
.grid-row {
    display: flex;
    flex: 1;
    min-height: 0;
    margin-top: 2px;
    border: 1px solid #999;
    background: #fff;
}
.grid-col {
    display: flex;
    flex-direction: column;
    flex: 1;
    min-width: 0;
}
.grid-scroll {
    flex: 1;
    min-height: 0;
    overflow: hidden;
}
table {
    width: 359px;
    table-layout: fixed;
    border-collapse: separate;
    border-spacing: 0;
}
.c-head { width: 25px; }
.c-fid { width: 50px; }
.c-shape { width: 68px; }
.c-area { width: 71px; }
.c-perim { width: 92px; }
.c-next { width: 53px; }
th, td {
    height: 28px;
    font-weight: 400;
    text-align: left;
    white-space: nowrap;
    border-right: 1px solid #c6c6c6;
    border-bottom: 1px solid #c6c6c6;
}
th:last-child, td:last-child {
    border-right: none;
}
thead th {
    height: 25px;
    padding-left: 8px;
    background: #f0f0f0;
    color: #333;
}
thead .corner {
    padding-left: 10px;
    background: #fff;
}
.corner .expander {
    display: inline-block;
    border-width: 5px;
}
thead .sorted {
    background: #b9d3e8;
    border-right: 1px solid #0079c1;
    border-bottom: 2px solid #0079c1;
}
td:nth-child(2), td:nth-child(3) {
    padding-left: 2px;
}
td:nth-child(4), td:nth-child(5) {
    text-align: right;
    padding-right: 8px;
}
td:nth-child(6) {
    padding-left: 45px;
}
tbody th {
    background: #dedede;
}
tbody tr:nth-child(even) td {
    background: #eaeaea;
}
.current th {
    background: #b9d3e8;
    border-right: 4px solid #0079c1;
}
.current td:nth-child(2) {
    background: #c5dbed;
    color: #222;
}

/* scroll bars */
.track {
    flex: 1;
    display: block;
    background: #dcdcdc;
}
.thumb {
    display: block;
    background: #78bae6;
}
.hbar {
    display: flex;
    align-items: center;
    gap: 3px;
    height: 16px;
    padding: 0 3px 0 27px;
}
.hbar .track, .hbar .thumb {
    height: 10px;
}
.hbar .thumb {
    width: 53%;
}
.vbar {
    display: flex;
    flex-direction: column;
    align-items: center;
    gap: 4px;
    flex: none;
    width: 10px;
}
.vbar .track, .vbar .thumb {
    width: 100%;
}
.arrow-left, .arrow-right, .arrow-up, .arrow-down {
    border: 5px solid transparent;
}
.arrow-left {
    border-right: 9px solid #888;
    border-left: none;
}
.arrow-right {
    border-left: 9px solid #888;
    border-right: none;
}
.arrow-up {
    border-bottom: 8px solid #999;
    border-top: none;
}
.arrow-down {
    border-top: 8px solid #888;
    border-bottom: none;
}
.grid-vbar {
    margin: 0 3px 3px 2px;
}
.geo-vbar .thumb {
    height: 65%;
}
.result-vbar {
    margin-right: 1px;
}
.result-vbar .thumb {
    height: 24%;
}

.table-foot {
    display: flex;
    align-items: center;
    gap: 5px;
    height: 32px;
    flex: none;
    padding-left: 2px;
    background: #f7f7f7;
    overflow: hidden;
    white-space: nowrap;
}
.table-foot .icon-btn {
    width: 24px;
    flex: none;
}
.table-foot .foot-on {
    width: 28px;
    height: 28px;
    background: #9cc6e6;
    border: 2px solid #2a7ab8;
}
.selected-count {
    margin: 0 13px 0 4px;
}
.map-pane {
    display: flex;
    flex-direction: column;
    flex: 1;
    min-width: 0;
    margin: 26px 0 0 9px;
    border-top: 3px solid #d0d0d0;
}
.map-canvas {
    flex: 1;
    background: #fff;
    border-left: 1px solid #ccc;
}
.map-foot {
    display: flex;
    align-items: center;
    gap: 5px;
    height: 29px;
    padding-left: 7px;
    background: #f7f7f7;
    border-left: 1px solid #ccc;
}
.map-foot .rule {
    width: 2px;
    height: 20px;
}
.map-foot .rule-end {
    margin-left: 5px;
}
.map-foot .icon-btn {
    width: 24px;
    height: 26px;
    margin-right: -1px;
}
.map-foot .map-on {
    width: 26px;
    background: #9dd2ef;
}
.coords {
    display: flex;
    align-items: center;
    gap: 12px;
    margin: 0 140px 0 auto;
}

/* fields with a drop-down arrow */
.pick {
    position: relative;
    flex: 1;
}
.pick::after {
    content: "";
    position: absolute;
    right: 4px;
    top: 12px;
    border: 4px solid transparent;
    border-top-color: #222;
    border-bottom: none;
    pointer-events: none;
}
.pick select, .field input {
    display: block;
    width: 100%;
    height: 28px;
    padding-left: 4px;
    line-height: 20px;
    background: #fff;
    border: 1px solid #999;
    appearance: none;
}
.pick-scale {
    flex: none;
    width: 125px;
}

/* geoprocessing pane */
.geo {
    position: absolute;
    left: 569px;
    top: 91px;
    width: 595px;
    height: 401px;
    display: flex;
    flex-direction: column;
    background: #f7f7f7;
    border: 1px solid #8a8a8a;
    padding: 1px;
    box-shadow: 0 2px 12px rgba(0, 0, 0, 0.4);
}
.geo-title {
    display: flex;
    align-items: flex-start;
    gap: 8px;
    padding: 0 7px 0 6px;
    height: 41px;
    border-top: 5px solid #0078d0;
}
.geo-title h1 {
    flex: 1;
    font-size: 19px;
    line-height: 30px;
    color: #0f78be;
}
.geo-title .icon-btn {
    height: 22px;
}
.geo-tool {
    display: flex;
    align-items: center;
    justify-content: space-between;
    height: 44px;
    padding: 0 7px 0 10px;
}
.geo-tool h2 {
    font-size: 18px;
}
.geo-tabs {
    display: flex;
    align-items: flex-end;
    gap: 12px;
    height: 37px;
    padding: 0 7px 0 12px;
    margin-bottom: 1px;
}
.geo-tab {
    height: 28px;
    padding-bottom: 2px;
    border-bottom: 2px solid transparent;
    font-size: 15px;
}
.geo-tab-on {
    font-weight: 600;
    border-color: #0079c1;
}
.help {
    width: 20px;
    height: 20px;
    margin: 0 0 2px auto;
    border: 1px solid #4a9ad4;
    border-radius: 50%;
    background: #e4f4fb;
    color: #2f8fd0;
    font-size: 16px;
}
.geo-body {
    display: flex;
    height: 168px;
    padding: 14px 2px 0 23px;
}
.fields {
    flex: 1;
    overflow: hidden;
    padding-top: 6px;
}
.fields label {
    display: block;
    height: 17px;
}
.field {
    display: flex;
    align-items: center;
    gap: 8px;
    height: 28px;
    margin: 1px 0 7px;
}
.field .icon-btn {
    width: 20px;
    margin-right: 16px;
}
.run-row {
    display: flex;
    justify-content: flex-end;
    padding: 7px 7px 0;
}
.run {
    display: flex;
    align-items: center;
    justify-content: space-between;
    width: 100px;
    height: 32px;
    padding: 0 4px 0 12px;
    background: #fff;
    border: 1px solid #444;
}
.run span {
    flex: 1;
    padding-left: 10px;
    text-align: left;
}
.run .caret {
    border-width: 3px;
    border-bottom: none;
}
.geo-status {
    display: flex;
    align-items: center;
    gap: 21px;
    height: 57px;
    margin: 8px 4px 0 6px;
    padding-left: 16px;
    background: #f5cac1;
}
.geo-status p {
    line-height: 25px;
}
.geo-status a {
    margin-right: 10px;
    color: #5f8a4c;
    text-decoration: none;
}

/* result popup */
.result {
    position: absolute;
    left: 819px;
    top: 437px;
    width: 550px;
    height: 375px;
    display: flex;
    flex-direction: column;
    background: #fff;
    border: 1px solid #1278b8;
    box-shadow: 0 2px 12px rgba(0, 0, 0, 0.4);
}
.result header {
    display: flex;
    align-items: center;
    justify-content: space-between;
    height: 37px;
    padding: 1px 12px 0 9px;
}
.result h1 {
    font-size: 16px;
    font-weight: 600;
    line-height: 22px;
    color: #0f78be;
}
.result-state {
    display: flex;
    align-items: center;
    gap: 21px;
    height: 32px;
    padding-left: 15px;
    background: #f5cac1;
}
.times {
    padding: 9px 9px 0;
    font-size: 13px;
    line-height: 26px;
    color: #666;
}
.log-row {
    display: flex;
    height: 209px;
}
.log {
    flex: 1;
    overflow: hidden;
    padding: 11px 3px 0 16px;
}
.log h2 {
    display: flex;
    align-items: center;
    gap: 3px;
    font-size: 15px;
    font-weight: 500;
    line-height: 22px;
}
.messages {
    padding: 3px 0 6px 15px;
    font: 14px/18px "Liberation Mono", monospace;
    color: #cf3a18;
    white-space: nowrap;
}
.messages p {
    margin-bottom: 2px;
}
.messages svg {
    margin: 0 5px 0 2px;
    vertical-align: -2px;
}
.messages a {
    color: inherit;
    font-weight: 700;
}
.log dl {
    display: flex;
    margin: 10px 0 0 15px;
    height: 30px;
    line-height: 25px;
    background: #ebebeb;
}
.log dt {
    width: 190px;
    color: #888;
}
.grip {
    position: absolute;
    right: 3px;
    bottom: 3px;
}

.marks {
    position: absolute;
    left: 0;
    top: 0;
    pointer-events: none;
}
.marks path, .marks circle {
    fill: none;
    stroke: #ff8a1c;
    stroke-width: 4;
    stroke-linecap: round;
    stroke-linejoin: round;
}
.marks circle {
    fill: #ff8a1c;
    stroke-width: 1;
}
```
